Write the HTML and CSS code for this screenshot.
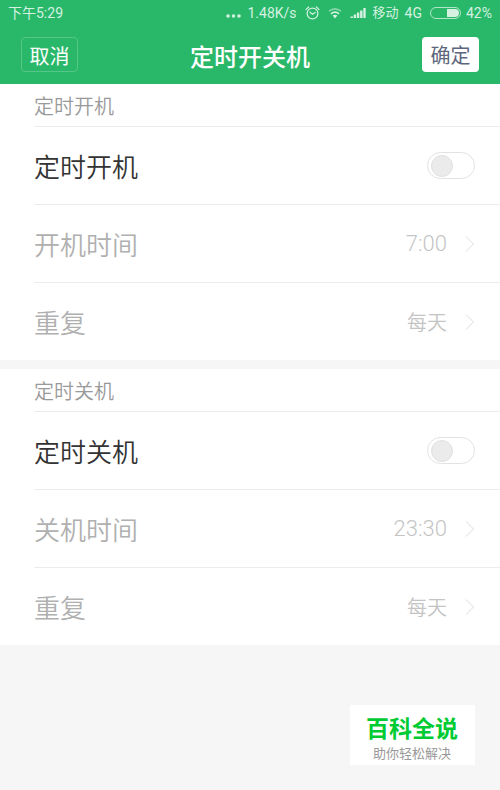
FILE: index.html
```html
<!DOCTYPE html>
<html lang="zh-CN">
<head>
    <meta charset="UTF-8">
    <meta name="viewport" content="width=device-width, initial-scale=1.0">
    <title>定时开关机</title>
    <link rel="stylesheet" href="styles.css">
</head>
<body>

<header class="top">
    <div class="status-bar">
        <span class="time">下午5:29</span>
        <svg class="dots" width="15" height="14" viewBox="0 0 15 14" fill="currentColor">
            <circle cx="2" cy="10" r="1.8"/>
            <circle cx="7.5" cy="10" r="1.8"/>
            <circle cx="13" cy="10" r="1.8"/>
        </svg>
        <span class="speed">1.48K/s</span>
        <svg class="alarm" width="15" height="14" viewBox="0 0 15 14" fill="none" stroke="currentColor" stroke-width="1.2" stroke-linecap="round">
            <circle cx="7.5" cy="7.5" r="5.4"/>
            <path d="M5 6.2 L7.5 8.2 L10.2 6.4"/>
            <path d="M1 3.6 L3.6 1 M14 3.6 L11.4 1"/>
        </svg>
        <svg class="wifi" width="14" height="12" viewBox="0 0 14 12" fill="none" stroke="currentColor" stroke-width="1.7">
            <path d="M1 4.2 Q7 -0.6 13 4.2" opacity="0.55"/>
            <path d="M3 6.8 Q7 3.4 11 6.8"/>
            <path d="M4.6 8.6 Q7 6.8 9.4 8.6 L7 11.4 Z" fill="currentColor" stroke="none"/>
        </svg>
        <svg class="signal" width="17" height="12" viewBox="0 0 17 12" fill="currentColor">
            <rect x="0.5" y="9.5" width="2.4" height="1.5"/>
            <rect x="3.7" y="7.5" width="2.4" height="3.5"/>
            <rect x="6.9" y="5.5" width="2.4" height="5.5"/>
            <rect x="10.1" y="3.5" width="2.4" height="7.5"/>
            <rect x="13.3" y="1" width="2.4" height="10"/>
        </svg>
        <span class="carrier">移动</span>
        <span class="network">4G</span>
        <svg class="battery" width="31" height="12" viewBox="0 0 31 12">
            <rect x="0.5" y="0.5" width="30" height="11" rx="5.5" fill="none" stroke="currentColor" opacity="0.8"/>
            <path d="M17 2 H25 A4 4 0 0 1 25 10 H17 Z" fill="currentColor"/>
        </svg>
        <span class="percent">42%</span>
    </div>
    <div class="nav-bar">
        <button type="button" class="btn btn-cancel">取消</button>
        <h1>定时开关机</h1>
        <button type="button" class="btn btn-ok">确定</button>
    </div>
</header>

<main>
    <section class="group">
        <h2>定时开机</h2>
        <div class="row">
            <label for="power-on">定时开机</label>
            <input type="checkbox" id="power-on" class="switch">
        </div>
        <button type="button" class="row" disabled>
            <span class="name">开机时间</span>
            <span class="value">7:00</span>
            <svg class="arrow" width="10" height="18" viewBox="0 0 10 18"><path d="M1 1.5 L8.5 9 L1 16.5"/></svg>
        </button>
        <button type="button" class="row" disabled>
            <span class="name">重复</span>
            <span class="value value-text">每天</span>
            <svg class="arrow" width="10" height="18" viewBox="0 0 10 18"><path d="M1 1.5 L8.5 9 L1 16.5"/></svg>
        </button>
    </section>

    <section class="group">
        <h2>定时关机</h2>
        <div class="row">
            <label for="power-off">定时关机</label>
            <input type="checkbox" id="power-off" class="switch">
        </div>
        <button type="button" class="row" disabled>
            <span class="name">关机时间</span>
            <span class="value">23:30</span>
            <svg class="arrow" width="10" height="18" viewBox="0 0 10 18"><path d="M1 1.5 L8.5 9 L1 16.5"/></svg>
        </button>
        <button type="button" class="row" disabled>
            <span class="name">重复</span>
            <span class="value value-text">每天</span>
            <svg class="arrow" width="10" height="18" viewBox="0 0 10 18"><path d="M1 1.5 L8.5 9 L1 16.5"/></svg>
        </button>
    </section>
</main>

<footer class="brand">
    <strong>百科全说</strong>
    <span>助你轻松解决</span>
</footer>

</body>
</html>
```

FILE: styles.css
```css
* {
    box-sizing: border-box;
    margin: 0;
    padding: 0;
}

body {
    font-family: "Noto Sans CJK SC", sans-serif;
    background-color: #f6f6f6;
    color: #333;
}

button {
    font-family: inherit;
    border: none;
    background: none;
}

/* Header */
.top {
    background-color: #29b869;
    color: #fff;
}

.status-bar {
    display: flex;
    align-items: center;
    height: 26px;
    padding: 0 8px;
    color: #d4f1e1;
    font-family: Roboto, "Noto Sans CJK SC", sans-serif;
    font-size: 14px;
    line-height: 26px;
}

.time {
    margin-right: auto;
}

.speed {
    margin-left: 6px;
}

.alarm,
.wifi,
.signal {
    margin-left: 8px;
}

.carrier {
    margin-left: 6px;
    font-size: 13px;
}

.network {
    margin-left: 6px;
}

.battery {
    margin-left: 8px;
}

.percent {
    margin-left: 5px;
}

.nav-bar {
    display: flex;
    align-items: center;
    justify-content: space-between;
    height: 58px;
    padding: 0 21px 2px;
}

.nav-bar h1 {
    padding-top: 3px;
    font-size: 24px;
    font-weight: 500;
    line-height: 36px;
}

.btn {
    width: 57px;
    height: 35px;
    padding-top: 2px;
    border-radius: 4px;
    font-size: 20px;
    font-weight: 400;
    line-height: 32px;
}

.btn-cancel {
    border: 1px solid #54c688;
    color: #fff;
}

.btn-ok {
    background-color: #fff;
    color: #5d667c;
}

/* Setting groups */
.group {
    padding-left: 34px;
    background-color: #fff;
}

.group + .group {
    margin-top: 9px;
}

.group h2 {
    height: 43px;
    border-bottom: 1px solid #ececec;
    color: #999;
    font-size: 20px;
    font-weight: 350;
    line-height: 44px;
}

.row {
    display: flex;
    align-items: center;
    width: 100%;
    height: 78px;
    padding-right: 25px;
    border-bottom: 1px solid #ececec;
    font-size: 26px;
    font-weight: 350;
    text-align: left;
}

.row:last-child {
    height: 77px;
    border-bottom: none;
}

.row label,
.row .name {
    flex: 1;
}

.row .name {
    color: #b0b0b0;
}

.value {
    color: #c4c4c4;
    font-family: Roboto, sans-serif;
    font-size: 22px;
    font-weight: 300;
}

.value-text {
    font-family: "Noto Sans CJK SC", sans-serif;
    font-size: 20px;
    font-weight: 350;
}

.arrow {
    margin-left: 18px;
    fill: none;
    stroke: #ddd;
}

.switch {
    appearance: none;
    display: flex;
    align-items: center;
    width: 48px;
    height: 27px;
    padding: 0 3px;
    border: 1px solid #e2e2e2;
    border-radius: 14px;
    background-color: #fff;
}

.switch::before {
    content: "";
    width: 20px;
    height: 20px;
    border: 1px solid #e0e0e0;
    border-radius: 50%;
    background-color: #ebebeb;
}

.switch:checked {
    justify-content: flex-end;
    background-color: #29b869;
}

/* Brand card */
.brand {
    display: flex;
    flex-direction: column;
    align-items: center;
    width: fit-content;
    margin: 60px 25px 25px auto;
    padding: 5px 17px 3px 16px;
    background-color: #fff;
}

.brand strong {
    color: #00cb33;
    font-size: 23px;
    font-weight: 700;
    line-height: 34px;
}

.brand span {
    color: #999;
    font-size: 13px;
    line-height: 18px;
}
```
